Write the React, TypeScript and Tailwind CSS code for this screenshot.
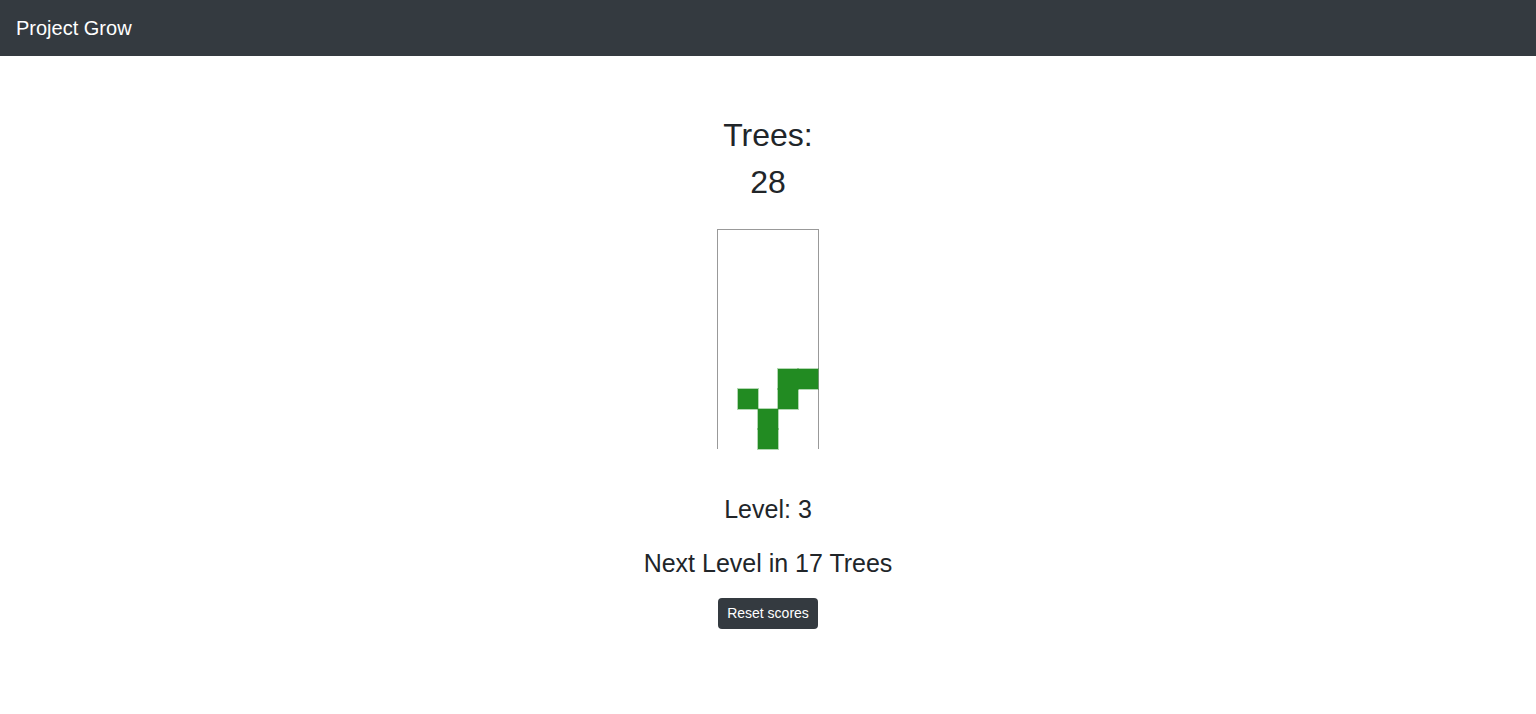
import React from "react";

const cells: [number, number][] = [
  [3, 7],
  [4, 7],
  [1, 8],
  [3, 8],
  [2, 9],
  [2, 10],
];

export default function App() {
  return (
    <div className="min-h-[714px] bg-white font-['Liberation_Sans',Arial,sans-serif] text-[#212529]">
      <nav className="flex h-14 items-center bg-[#343a40] px-4">
        <span className="text-[20px] leading-[30px] text-white">Project Grow</span>
      </nav>
      <main className="flex flex-col items-center pt-[60px]">
        <h2 className="text-[32px] leading-[38px]">Trees:</h2>
        <h2 className="mt-[9px] text-[32px] leading-[38px]">28</h2>
        <div className="relative mt-[28px] h-[220px] w-[102px] border-x border-t border-[#999999]">
          {cells.map(([c, r]) => (
            <div
              key={`${c}-${r}`}
              className="absolute h-[20px] w-[20px] bg-[#228b22] shadow-[0_0_0_1px_rgba(34,139,34,0.35)]"
              style={{ left: c * 20, top: r * 20 - 1 }}
            />
          ))}
        </div>
        <h4 className="mt-[46px] text-[25px] leading-[29px]">Level: 3</h4>
        <h4 className="mt-[25px] text-[25px] leading-[29px]">Next Level in 17 Trees</h4>
        <button className="mt-[20px] h-[31px] rounded-[4px] bg-[#343a40] px-[9px] text-[14px] leading-[21px] text-white">
          Reset scores
        </button>
      </main>
    </div>
  );
}
